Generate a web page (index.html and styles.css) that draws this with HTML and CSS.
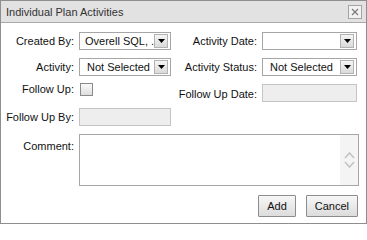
FILE: index.html
```html
<!DOCTYPE html>
<html>
<head>
<meta charset="utf-8">
<link rel="stylesheet" href="styles.css">
</head>
<body>
<div class="dialog">
  <div class="titlebar">
    <span class="title">Individual Plan Activities</span>
    <span class="close"><svg width="8" height="8" viewBox="0 0 8 8"><path d="M1 1L7 7M7 1L1 7" stroke="#7a7a7a" stroke-width="1.2" fill="none"/></svg></span>
  </div>
  <div class="form">
    <span class="lbl">Created By:</span>
    <div class="select"><span class="val">Overell SQL, ...</span><span class="arrow"><svg width="7" height="4" viewBox="0 0 7 4"><path d="M0 0H7L3.5 4Z" fill="#000"/></svg></span></div>
    <span class="lbl">Activity Date:</span>
    <div class="select"><span class="val"></span><span class="arrow"><svg width="7" height="4" viewBox="0 0 7 4"><path d="M0 0H7L3.5 4Z" fill="#000"/></svg></span></div>

    <span class="lbl">Activity:</span>
    <div class="select"><span class="val pad">Not Selected</span><span class="arrow"><svg width="7" height="4" viewBox="0 0 7 4"><path d="M0 0H7L3.5 4Z" fill="#000"/></svg></span></div>
    <span class="lbl">Activity Status:</span>
    <div class="select"><span class="val pad">Not Selected</span><span class="arrow"><svg width="7" height="4" viewBox="0 0 7 4"><path d="M0 0H7L3.5 4Z" fill="#000"/></svg></span></div>

    <span class="lbl short">Follow Up:</span>
    <span class="check"></span>
    <span class="lbl low">Follow Up Date:</span>
    <span class="input disabled low-in"></span>

    <span class="lbl">Follow Up By:</span>
    <span class="input disabled"></span>
    <span class="spacer"></span>
    <span class="spacer"></span>

    <span class="lbl top">Comment:</span>
    <div class="textarea">
      <span class="scroll"><svg width="11" height="20" viewBox="0 0 11 20"><path d="M1 8L5.5 3L10 8" stroke="#c4c4c4" stroke-width="1.6" fill="none"/><path d="M1 12L5.5 17L10 12" stroke="#c4c4c4" stroke-width="1.6" fill="none"/></svg></span>
    </div>
  </div>
  <div class="actions">
    <button class="btn">Add</button>
    <button class="btn">Cancel</button>
  </div>
</div>
</body>
</html>
```
FILE: styles.css
```css
html, body {
  margin: 0;
  padding: 0;
  background: #fff;
}
body {
  font-family: "Liberation Sans", Arial, sans-serif;
  font-size: 11px;
  color: #111;
}
.dialog {
  width: 365px;
  height: 222px;
  border: 1px solid #8e8e8e;
  display: flex;
  flex-direction: column;
}
.titlebar {
  height: 21px;
  background: #e2e2e2;
  border-bottom: 1px solid #a9a9a9;
  display: flex;
  align-items: center;
  justify-content: space-between;
  padding: 0 4px 0 5px;
}
.title {
  color: #333;
}
.close {
  box-sizing: border-box;
  width: 14px;
  height: 14px;
  border: 1px solid #a4a4a4;
  background: #f2f2f2;
  display: flex;
  align-items: center;
  justify-content: center;
}
.form {
  display: grid;
  grid-template-columns: 73px 92px 81px 95px;
  grid-template-rows: 26px 25px 25px 26px 52px;
  column-gap: 5px;
  align-items: start;
  margin-top: 9px;
}
.lbl {
  text-align: right;
  white-space: nowrap;
  line-height: 18px;
}
.lbl.short {
  line-height: 12px;
}
.lbl.low {
  margin-top: 2px;
}
.lbl.top {
  line-height: 13px;
  padding-top: 6px;
}
.select {
  box-sizing: border-box;
  height: 18px;
  border: 1px solid #a6a6a6;
  background: #fff;
  display: flex;
  align-items: center;
  padding: 0 2px 0 5px;
}
.val {
  flex: 1;
  overflow: hidden;
  white-space: nowrap;
  line-height: 16px;
}
.val.pad {
  padding-left: 2px;
}
.arrow {
  box-sizing: border-box;
  width: 14px;
  height: 14px;
  border: 1px solid #b3b3b3;
  background: linear-gradient(#f5f5f5, #dadada);
  display: flex;
  align-items: center;
  justify-content: center;
  flex: none;
}
.check {
  box-sizing: border-box;
  width: 13px;
  height: 13px;
  margin-left: 1px;
  border: 1px solid #8a8a8a;
  background: linear-gradient(#fafafa, #dedede);
}
.input {
  box-sizing: border-box;
  height: 18px;
  border: 1px solid #c4c4c4;
  background: #fff;
}
.input.disabled {
  background: #eeeeee;
}
.input.low-in {
  margin-top: 1px;
}
.textarea {
  grid-column: 2 / 5;
  box-sizing: border-box;
  width: 280px;
  height: 52px;
  border: 1px solid #a6a6a6;
  background: #fff;
  display: flex;
  justify-content: flex-end;
}
.scroll {
  width: 18px;
  background: #f4f4f4;
  display: flex;
  align-items: center;
  justify-content: center;
}
.actions {
  display: flex;
  justify-content: flex-end;
  gap: 10px;
  margin-top: 9px;
  padding-right: 8px;
}
.btn {
  box-sizing: border-box;
  height: 22px;
  margin: 0;
  padding: 0 8px;
  border: 1px solid #8c8c8c;
  border-radius: 1px;
  background: linear-gradient(#f7f7f7, #dcdcdc);
  font-family: "Liberation Sans", Arial, sans-serif;
  font-size: 11px;
  color: #111;
}
```
